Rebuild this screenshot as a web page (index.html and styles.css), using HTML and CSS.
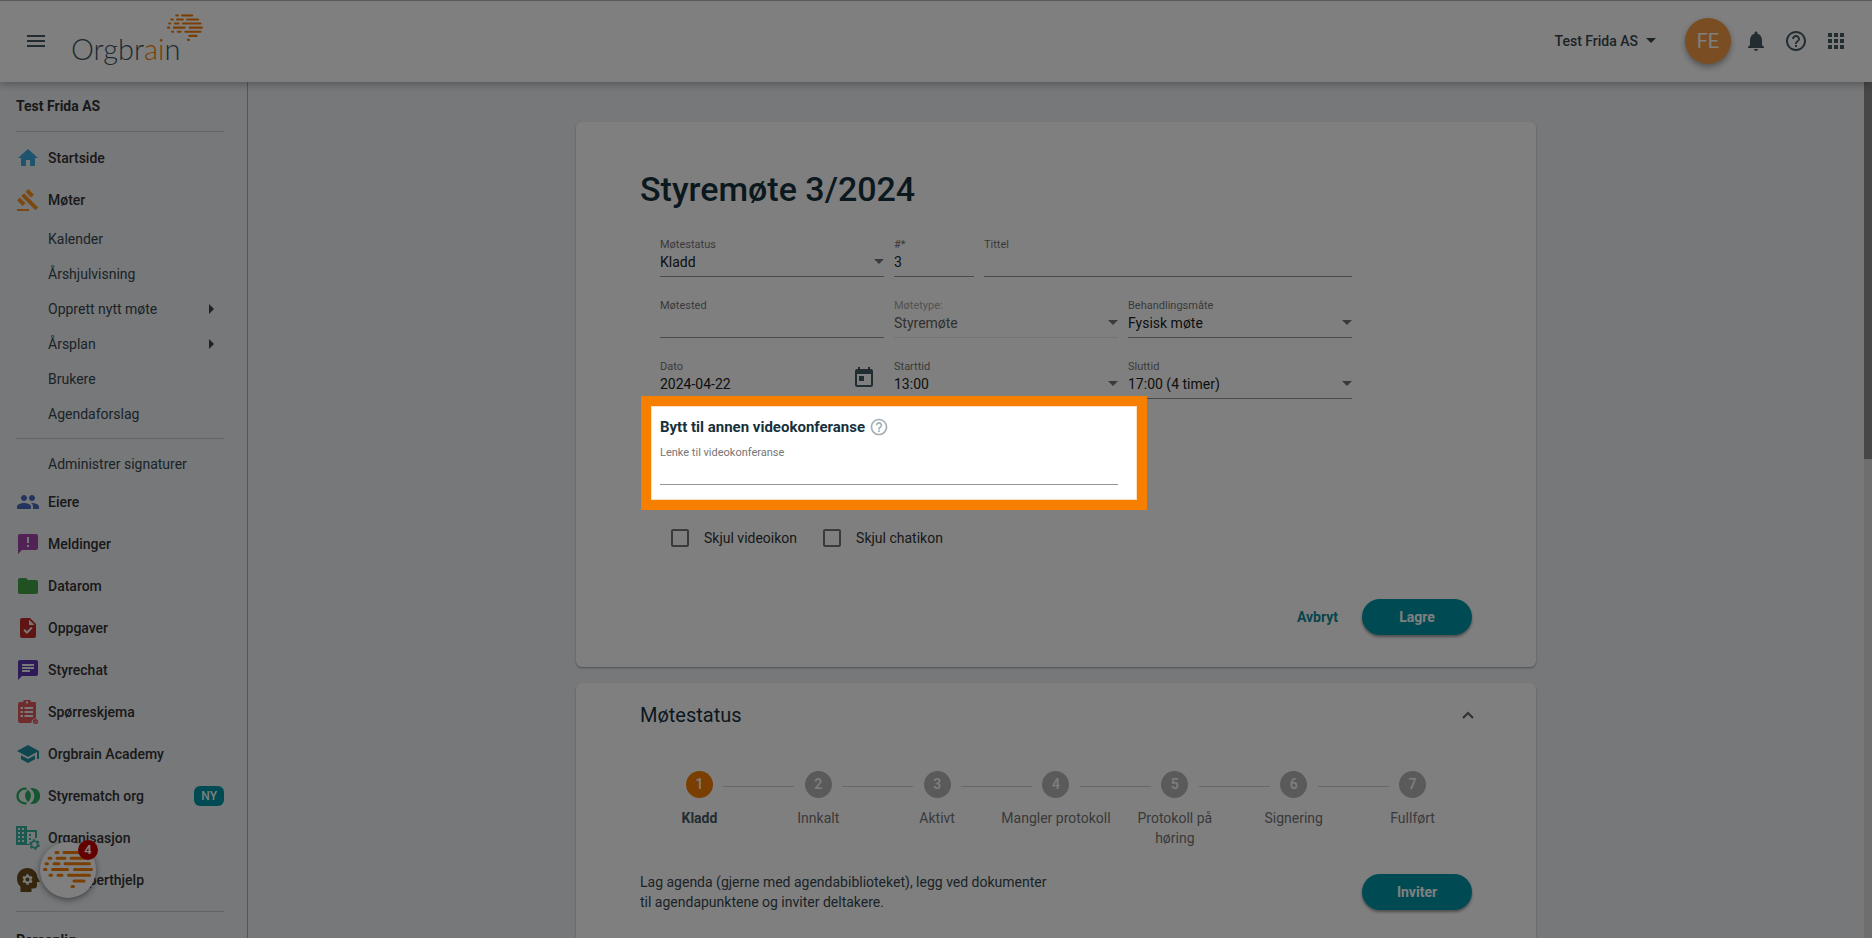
FILE: index.html
```html
<!DOCTYPE html>
<html lang="no">
<head>
<meta charset="utf-8">
<title>Styremøte 3/2024 – Orgbrain</title>
<link rel="stylesheet" href="styles.css">
</head>
<body>
<svg class="defs" aria-hidden="true">
  <symbol id="brain" viewBox="0 0 50 38">
    <g stroke="#f57c00" stroke-width="3" stroke-linecap="round">
      <path d="M13 1.5h2M21 1.5h14M6 7.200h2M14 7.200h8M28 7.200h15M3 12.800h1.500M11 12.800h5M22 12.800h24.500M1.500 18.500h1.500M9.500 18.500h15M31.500 18.500h17M7 24.200h1.500M15 24.200h4M25.500 24.200h21M31 30h10M29 35.600h1.500"/>
    </g>
  </symbol>
  <symbol id="help" viewBox="0 0 24 24"><path d="M11 18h2v-2h-2v2zm1-16C6.480 2 2 6.480 2 12s4.480 10 10 10 10-4.480 10-10S17.520 2 12 2zm0 18c-4.410 0-8-3.590-8-8s3.590-8 8-8 8 3.590 8 8-3.590 8-8 8zm0-14c-2.210 0-4 1.790-4 4h2c0-1.100.9-2 2-2s2 .9 2 2c0 2-3 1.750-3 5h2c0-2.250 3-2.500 3-5 0-2.210-1.790-4-4-4z"/></symbol>
</svg>

<header class="topbar">
  <button class="icon-button" type="button" aria-label="Meny"><svg class="icon" viewBox="0 0 24 24"><path d="M3 18h18v-2H3v2zm0-5h18v-2H3v2zm0-7v2h18V6H3z"/></svg></button>
  <a class="logo" href="#" aria-label="Orgbrain">
    <span class="logo-text">Orgbr<b>ai</b>n</span>
    <svg class="logo-mark" viewBox="0 0 50 38"><use href="#brain"/></svg>
  </a>
  <div class="topbar-tools">
    <button class="company" type="button">Test Frida AS <span class="caret"></span></button>
    <button class="avatar" type="button">FE</button>
    <button class="icon-button" type="button" aria-label="Varsler"><svg class="icon" viewBox="0 0 24 24"><path d="M12 22c1.100 0 2-.9 2-2h-4c0 1.100.89 2 2 2zm6-6v-5c0-3.070-1.640-5.640-4.500-6.320V4c0-.83-.67-1.500-1.500-1.500s-1.500.67-1.500 1.500v.68C7.630 5.360 6 7.920 6 11v5l-2 2v1h16v-1l-2-2z"/></svg></button>
    <button class="icon-button" type="button" aria-label="Hjelp"><svg class="icon"><use href="#help"/></svg></button>
    <button class="icon-button" type="button" aria-label="Apper"><svg class="icon" viewBox="0 0 24 24"><path d="M4 8h4V4H4v4zm6 12h4v-4h-4v4zm-6 0h4v-4H4v4zm0-6h4v-4H4v4zm6 0h4v-4h-4v4zm6-10v4h4V4h-4zm-6 4h4V4h-4v4zm6 6h4v-4h-4v4zm0 6h4v-4h-4v4z"/></svg></button>
  </div>
</header>

<div class="shell">
  <nav class="sidebar">
    <h2 class="side-title">Test Frida AS</h2>
    <hr class="rule">
    <a class="item first" href="#"><svg class="icon blue" viewBox="0 0 24 24"><path d="M10 20v-6h4v6h5v-8h3L12 3 2 12h3v8z"/></svg>Startside</a>
    <a class="item" href="#"><svg class="icon orange" viewBox="0 0 24 24"><path d="M1 21h12v2H1zM5.245 8.070l2.830-2.827 14.140 14.142-2.828 2.828zM12.317 1l5.657 5.656-2.830 2.830-5.654-5.660zM3.825 9.485l5.657 5.657-2.828 2.828-5.657-5.657z"/></svg>Møter</a>
    <a class="sub" href="#">Kalender</a>
    <a class="sub" href="#">Årshjulvisning</a>
    <a class="sub" href="#">Opprett nytt møte<span class="arrow"></span></a>
    <a class="sub" href="#">Årsplan<span class="arrow"></span></a>
    <a class="sub" href="#">Brukere</a>
    <a class="sub" href="#">Agendaforslag</a>
    <hr class="rule group">
    <a class="sub" href="#">Administrer signaturer</a>
    <a class="item" href="#"><svg class="icon indigo" viewBox="0 0 24 24"><path d="M16 11c1.660 0 2.990-1.340 2.990-3S17.660 5 16 5s-3 1.340-3 3 1.340 3 3 3zm-8 0c1.660 0 2.990-1.340 2.990-3S9.660 5 8 5 5 6.340 5 8s1.340 3 3 3zm0 2c-2.330 0-7 1.170-7 3.500V19h14v-2.500c0-2.330-4.670-3.500-7-3.500zm8 0c-.29 0-.62.020-.97.050 1.160.84 1.970 1.970 1.970 3.450V19h6v-2.500c0-2.330-4.670-3.500-7-3.500z"/></svg>Eiere</a>
    <a class="item" href="#"><svg class="icon purple" viewBox="0 0 24 24"><path d="M20 2H4c-1.100 0-2 .9-2 2v18l4-4h14c1.100 0 2-.9 2-2V4c0-1.100-.9-2-2-2zm-7 13h-2v-2h2v2zm0-4h-2V5h2v6z"/></svg>Meldinger</a>
    <a class="item" href="#"><svg class="icon green" viewBox="0 0 24 24"><path d="M10 4H4c-1.100 0-1.990.9-1.990 2L2 18c0 1.100.9 2 2 2h16c1.100 0 2-.9 2-2V8c0-1.100-.9-2-2-2h-8l-2-2z"/></svg>Datarom</a>
    <a class="item" href="#"><svg class="icon red" viewBox="0 0 24 24"><path d="M14 2H6c-1.100 0-2 .9-2 2v16c0 1.100.9 2 2 2h12c1.100 0 2-.9 2-2V8l-6-6zm-3.060 16L7.400 14.460l1.410-1.410 2.120 2.120 4.240-4.240 1.410 1.410L10.940 18zM13 9V3.500L18.500 9H13z"/></svg>Oppgaver</a>
    <a class="item" href="#"><svg class="icon violet" viewBox="0 0 24 24"><path d="M20 2H4c-1.100 0-1.990.9-1.990 2L2 22l4-4h14c1.100 0 2-.9 2-2V4c0-1.100-.9-2-2-2zM6 9h12v2H6V9zm8 5H6v-2h8v2zm4-6H6V6h12v2z"/></svg>Styrechat</a>
    <a class="item" href="#"><svg class="icon coral" viewBox="0 0 24 24"><path fill-rule="evenodd" d="M19 2h-4.200a3.800 3.800 0 0 0-7.600 0H4a2 2 0 0 0-2 2v17a2 2 0 0 0 2 2h11.500a4 4 0 0 1 4.500-4.500V3a1 1 0 0 0-1-1zM11 1.200a1.200 1.200 0 1 1 0 2.400 1.200 1.200 0 0 1 0-2.400zM4.500 7H7v2H4.500zm4 0H17v2H8.500zm-4 4H7v2H4.500zm4 0H17v2H8.500zm-4 4H7v2H4.500zm4 0H17v2H8.500z"/><circle cx="19.500" cy="21.500" r="2.600"/><path d="M18.200 21.600l1 1 1.700-1.900" fill="none" stroke="#eef0f4" stroke-width=".8"/></svg>Spørreskjema</a>
    <a class="item" href="#"><svg class="icon teal" viewBox="0 0 24 24"><path d="M5 13.180v4L12 21l7-3.820v-4L12 17l-7-3.820zM12 3L1 9l11 6 9-4.910V17h2V9L12 3z"/></svg>Orgbrain Academy</a>
    <a class="item" href="#"><svg class="icon emerald" viewBox="0 0 24 24"><path d="M10.500 4.900A7.300 7.300 0 1 0 10.500 19.100" fill="none" stroke="#27ae60" stroke-width="2.200"/><path d="M12 5.800a8 8 0 0 1 0 12.400 8 8 0 0 1 0-12.400zM14 4.300a8 8 0 1 1 0 15.400 9 9 0 0 0 0-15.400z"/></svg>Styrematch org<span class="tag">NY</span></a>
    <a class="item" href="#"><svg class="icon mint" viewBox="0 0 24 24"><path fill-rule="evenodd" d="M0 0h11v4h10v8h-2V6h-8v12h3v1H0zM2 2v2h2V2zm4 0v2h2V2zM2 6v2h2V6zm4 0v2h2V6zm-4 4v2h2v-2zm4 0v2h2v-2zm-4 4v2h2v-2zm4 0v2h2v-2zM13 8h2v2h-2zM13 12h2v2h-2z"/><circle cx="18.500" cy="18.500" r="3.200" fill="none" stroke="#35b0a0" stroke-width="1.600"/><circle cx="18.500" cy="18.500" r="4.500" fill="none" stroke="#35b0a0" stroke-width="1.600" stroke-dasharray="2.360"/></svg>Organisasjon</a>
    <a class="item" href="#"><svg class="icon brown" viewBox="0 0 24 24"><path fill-rule="evenodd" d="M11.500 0C5.500 0 1 4.600 1 10.400c0 3.500 1.300 6.300 3.500 8V24h11v-3.500H18c1.700 0 3-1.300 3-3V14h2c.6 0 .8-.6.500-1.100L21.400 9C21 4 17 0 11.500 0zM10.400 6.300h2.200l.3 1.400 1.200.7 1.400-.4 1 1.800-1 1v1.400l1 1-1 1.800-1.400-.4-1.200.7-.3 1.400h-2.200l-.3-1.400-1.200-.7-1.400.4-1-1.800 1-1v-1.400l-1-1 1-1.800 1.400.4 1.200-.7zM11.500 9.500a2 2 0 1 0 0 4 2 2 0 0 0 0-4z"/></svg>Få eksperthjelp</a>
    <hr class="rule section">
    <h2 class="side-title">Personlig</h2>
  </nav>

  <main class="content">
    <section class="card">
      <h1>Styremøte 3/2024</h1>
      <form class="form">
        <div class="row row-first">
          <div class="field"><label for="status">Møtestatus</label><select id="status"><option>Kladd</option></select></div>
          <div class="field"><label for="nr">#*</label><input id="nr" type="text" value="3"></div>
          <div class="field"><label for="tittel">Tittel</label><input id="tittel" type="text"></div>
        </div>
        <div class="row">
          <div class="field"><label for="sted">Møtested</label><input id="sted" type="text"></div>
          <div class="field disabled"><label for="type">Møtetype:</label><select id="type" disabled><option>Styremøte</option></select></div>
          <div class="field"><label for="mate">Behandlingsmåte</label><select id="mate"><option>Fysisk møte</option></select></div>
        </div>
        <div class="row">
          <div class="field"><label for="dato">Dato</label><input id="dato" type="text" value="2024-04-22"><svg class="icon calendar" viewBox="0 0 24 24"><path d="M19 3h-1V1h-2v2H8V1H6v2H5c-1.110 0-1.990.9-1.990 2L3 19c0 1.100.89 2 2 2h14c1.100 0 2-.9 2-2V5c0-1.100-.9-2-2-2zm0 16H5V8h14v11zM7 10h5v5H7z"/></svg></div>
          <div class="field"><label for="start">Starttid</label><select id="start"><option>13:00</option></select></div>
          <div class="field"><label for="slutt">Sluttid</label><select id="slutt"><option>17:00 (4 timer)</option></select></div>
        </div>
        <div class="conference">
          <h3>Bytt til annen videokonferanse <svg class="hint"><use href="#help"/></svg></h3>
          <div class="field"><label for="lenke">Lenke til videokonferanse</label><input id="lenke" type="text"></div>
          <div class="spotlight"></div>
        </div>
        <div class="checks">
          <label><input type="checkbox">Skjul videoikon</label>
          <label><input type="checkbox">Skjul chatikon</label>
        </div>
      </form>
      <div class="actions">
        <button class="text-button" type="button">Avbryt</button>
        <button class="primary" type="button">Lagre</button>
      </div>
    </section>

    <section class="card status-card">
      <div class="status-head">
        <h2>Møtestatus</h2>
        <button class="chevron" type="button" aria-label="Skjul"><svg viewBox="0 0 12 8"><path d="M1 7l5-5 5 5"/></svg></button>
      </div>
      <ol class="steps">
        <li class="current"><span>1</span>Kladd</li>
        <li><span>2</span>Innkalt</li>
        <li><span>3</span>Aktivt</li>
        <li><span>4</span>Mangler protokoll</li>
        <li><span>5</span>Protokoll på høring</li>
        <li><span>6</span>Signering</li>
        <li><span>7</span>Fullført</li>
      </ol>
      <div class="invite">
        <p>Lag agenda (gjerne med agendabiblioteket), legg ved dokumenter til agendapunktene og inviter deltakere.</p>
        <button class="primary" type="button">Inviter</button>
      </div>
    </section>
  </main>
  <div class="scrollbar"><div class="thumb"></div></div>
</div>

<button class="launcher" type="button" aria-label="Hjelpesenter"><svg viewBox="0 0 50 38"><use href="#brain"/></svg><span class="count">4</span></button>
</body>
</html>
```
FILE: styles.css
```css
* { box-sizing: border-box; }
body {
  margin: 0;
  height: 100vh;
  overflow: hidden;
  display: flex;
  flex-direction: column;
  background: #eef0f4;
  color: #37474f;
  font: 14px/20px Roboto, "Liberation Sans", sans-serif;
}
button, input, select { font: inherit; color: inherit; }
button { border: 0; padding: 0; background: none; }
a { color: inherit; text-decoration: none; }
h1, h2, h3, p, ol { margin: 0; padding: 0; }
.defs { position: absolute; width: 0; height: 0; }
.icon { width: 24px; height: 24px; fill: currentColor; flex: none; display: block; }

.topbar {
  position: relative;
  z-index: 2;
  flex: none;
  height: 82px;
  padding: 0 24px 2px;
  display: flex;
  align-items: center;
  background: #fff;
  border-top: 1px solid #b4b4b4;
  box-shadow: 0 2px 8px rgba(0, 0, 0, .3);
}
.icon-button { width: 24px; height: 24px; color: #455a64; }
.icon-button + .icon-button { margin-left: 16px; }
.logo { position: relative; margin-left: 23px; }
.logo-text {
  display: block;
  font: 300 29px/40px Lato, sans-serif;
  color: #3c5562;
  padding-top: 17px;
}
.logo-text b { font-weight: 300; color: #f57c00; }
.logo-mark { position: absolute; left: 96px; top: 2px; width: 36px; height: 28px; }
.topbar-tools { margin-left: auto; display: flex; align-items: center; }
.company { display: flex; align-items: center; gap: 8px; font-weight: 500; }
.caret { border: 5px solid transparent; border-top-color: currentColor; border-bottom: 0; }
.avatar {
  width: 46px; height: 46px;
  margin: 0 13px 0 29px;
  border-radius: 50%;
  background: #f79a45;
  color: #fff;
  font-size: 20px;
  box-shadow: 0 3px 6px rgba(0, 0, 0, .35);
}

.shell { flex: 1; min-height: 0; display: flex; }
.sidebar {
  flex: none;
  width: 248px;
  padding: 14px 23px 0 16px;
  border-right: 1px solid #a9abae;
  overflow: hidden;
}
.side-title { font-size: 14px; line-height: 20px; font-weight: 700; color: #333; }
.rule { margin: 15px 0 0; border: 0; border-top: 1px solid #c4c7ca; }
.rule.group { margin: 7px 0; }
.rule.section { margin: 10px 0 18px; }
.item, .sub { display: flex; align-items: center; }
.item { height: 42px; gap: 8px; color: #333; font-weight: 500; }
.item.first { margin-top: 5px; }
.sub { height: 35px; padding-left: 32px; }
.arrow { margin: 0 10px 0 auto; border: 5px solid transparent; border-left-color: currentColor; border-right: 0; }
.tag { margin-left: auto; padding: 0 7px; border-radius: 6px; background: #0097a7; color: #fff; font-size: 12px; }
.blue { color: #3fa9dc; }
.orange { color: #f7931e; }
.indigo { color: #4a69bd; }
.purple { color: #a347a9; }
.green { color: #43a047; }
.red { color: #c02b2b; }
.violet { color: #5e35b1; }
.coral { color: #e0585b; }
.teal { color: #1d8fa0; }
.emerald { color: #27ae60; }
.mint { color: #35b0a0; }
.brown { color: #6d4c1b; }

.content { flex: 1; min-width: 0; padding: 40px 24px 0; }
.card {
  max-width: 960px;
  margin: 0 auto 16px;
  padding: 47px 64px 32px;
  background: #fff;
  border-radius: 6px;
  box-shadow: 0 1px 2px rgba(0, 0, 0, .35);
}
h1 { font-size: 34px; line-height: 40px; font-weight: 500; color: #17313c; }
.form { padding: 23px 120px 0 20px; }
.row { display: grid; grid-template-columns: repeat(3, 1fr); gap: 10px; margin-bottom: 16px; }
.row-first { grid-template-columns: 224px 80px 1fr; column-gap: 10px; }
.field { position: relative; height: 45px; border-bottom: 1px solid #949494; }
.field label { display: block; font-size: 11px; line-height: 12px; padding-top: 7px; color: #757575; }
.field input, .field select {
  display: block;
  width: 100%;
  height: 20px;
  margin-top: 1px;
  padding: 0;
  border: 0;
  border-radius: 0;
  outline: 0;
  background: none;
  appearance: none;
  color: #212121;
  opacity: 1;
}
.field:has(select)::after {
  content: "";
  position: absolute;
  right: 0; top: 27px;
  border: 5px solid transparent;
  border-top-color: #757575;
  border-bottom: 0;
}
.field.disabled { border-color: #e8e8e8; }
.field.disabled label { color: #a6a6a6; }
.field.disabled select { color: #616161; }
.calendar { position: absolute; right: 8px; top: 12px; color: #455a64; }
.conference { position: relative; width: 458px; }
.conference h3 { display: flex; align-items: center; gap: 4px; font-size: 15px; line-height: 24px; padding-bottom: 1px; font-weight: 700; color: #17313c; }
.hint { width: 20px; height: 20px; fill: #a5afb5; }
.spotlight {
  position: absolute;
  z-index: 10;
  inset: -19px -29px -25px -19px;
  border: 10px solid #f77f00;
  box-shadow: inset 0 0 0 1px #fde0c0, 0 0 0 9999px rgba(0, 0, 0, .5);
  pointer-events: none;
}
.checks { display: flex; gap: 26px; padding: 43px 0 0 11px; color: #333; }
.checks label { display: flex; align-items: center; }
.checks input { appearance: none; width: 18px; height: 18px; margin: 0 15px 0 0; border: 2px solid #757575; border-radius: 2px; }
.actions { display: flex; justify-content: flex-end; gap: 24px; margin-top: 51px; }
.text-button { color: #0e8c99; font-weight: 700; }
.primary {
  flex: none;
  width: 110px; height: 36px;
  border-radius: 18px;
  background: #0097a7;
  color: #fff;
  font-weight: 700;
  box-shadow: 0 2px 3px rgba(0, 0, 0, .4);
}

.status-card { padding-top: 16px; }
.status-head { display: flex; align-items: center; justify-content: space-between; }
.status-head h2 { font-size: 20px; line-height: 32px; font-weight: 400; color: #17313c; }
.chevron { width: 12px; height: 20px; margin-right: -2px; }
.chevron svg { display: block; width: 12px; height: 8px; fill: none; stroke: #616161; stroke-width: 2; }
.steps { list-style: none; display: grid; grid-template-columns: repeat(7, 1fr); margin-top: 40px; }
.steps li { position: relative; padding: 0 2px; text-align: center; color: #757575; }
.steps li:not(:last-child)::after {
  content: "";
  position: absolute;
  top: 15px;
  left: calc(50% + 24px);
  width: calc(100% - 48px);
  border-top: 1px solid #d0d0d0;
}
.steps span {
  display: block;
  width: 27px; height: 27px;
  margin: 0 auto 10px;
  border-radius: 50%;
  background: #b5b5b5;
  color: #fff;
  line-height: 27px;
  font-weight: 500;
}
.steps .current { font-weight: 700; color: #455a64; }
.steps .current span { background: #f57c00; }
.invite { display: flex; align-items: center; justify-content: space-between; margin-top: 24px; }
.invite p { max-width: 420px; }

.scrollbar { flex: none; width: 8px; background: #dcdcdc; }
.thumb { height: 44%; background: #8f8f8f; }
.launcher {
  position: fixed;
  left: 40px; bottom: 40px;
  z-index: 3;
  width: 56px; height: 56px;
  border-radius: 50%;
  background: #fff;
  box-shadow: 0 2px 6px rgba(0, 0, 0, .45);
}
.launcher svg { display: block; width: 50px; height: 38px; margin: auto; }
.count {
  position: absolute;
  right: -2px; top: -2px;
  width: 20px; height: 20px;
  border-radius: 50%;
  background: #c90000;
  color: #fff;
  font-size: 13px;
  font-weight: 700;
}
```
